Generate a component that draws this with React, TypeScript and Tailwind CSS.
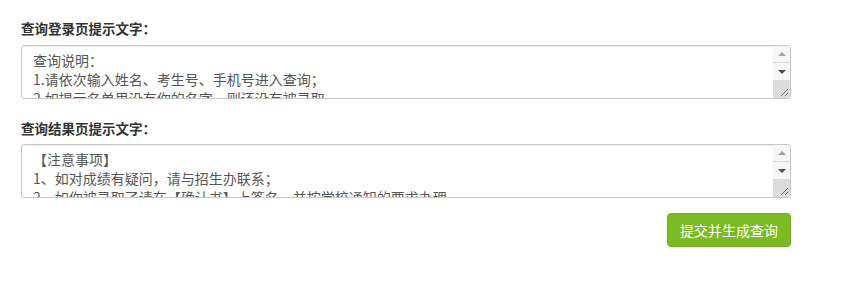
import { useState } from "react";

const font = { fontFamily: '"Microsoft YaHei", "Noto Sans CJK SC", "Liberation Sans", sans-serif' };

function FakeScrollbar() {
  return (
    <div className="w-[17px] h-full flex flex-col shrink-0 bg-[#f0f0f0]">
      <div className="h-[17px] flex items-center justify-center bg-[#f7f7f7] border-b border-[#dcdcdc]">
        <div className="w-0 h-0 border-l-[4px] border-r-[4px] border-b-[4px] border-l-transparent border-r-transparent border-b-[#a3a3a3]" />
      </div>
      <div className="h-[17px] flex items-center justify-center bg-[#f7f7f7]">
        <div className="w-0 h-0 border-l-[4px] border-r-[4px] border-t-[4px] border-l-transparent border-r-transparent border-t-[#505050]" />
      </div>
      <div className="flex-1 bg-[#dcdcdc] relative">
        <svg className="absolute right-[1px] bottom-[1px]" width="10" height="10" viewBox="0 0 10 10">
          <line x1="9" y1="2" x2="2" y2="9" stroke="#6d6d6d" strokeWidth="1" />
          <line x1="9" y1="6" x2="6" y2="9" stroke="#6d6d6d" strokeWidth="1" />
        </svg>
      </div>
    </div>
  );
}

function TipBox({ value, onChange }: { value: string; onChange: (v: string) => void }) {
  return (
    <div className="h-[54px] w-full flex border border-[#c8c8c8] rounded-[3px] overflow-hidden shadow-[inset_0_1px_1px_rgba(0,0,0,0.075)] bg-white">
      <textarea
        className="flex-1 h-full pl-[11px] pr-[4px] py-[5px] text-[14px] leading-[19px] text-[#555] overflow-hidden resize-none outline-none bg-transparent"
        value={value}
        onChange={(e) => onChange(e.target.value)}
      />
      <FakeScrollbar />
    </div>
  );
}

export default function App() {
  const [loginTip, setLoginTip] = useState(
    "查询说明：\n1.请依次输入姓名、考生号、手机号进入查询；\n2.如提示名单里没有你的名字，则还没有被录取。"
  );
  const [resultTip, setResultTip] = useState(
    "【注意事项】\n1、如对成绩有疑问，请与招生办联系；\n2、如你被录取了请在【确认书】上签名，并按学校通知的要求办理。"
  );

  return (
    <div className="w-[849px] h-[282px] bg-white text-[#333]" style={font}>
      <div className="w-[770px] ml-[21px] pt-[18px] flex flex-col">
        {/* 登录页 */}
        <label className="text-[13.5px] font-bold leading-[20px] h-[20px]">查询登录页提示文字：</label>
        <div className="mt-[7px]">
          <TipBox value={loginTip} onChange={setLoginTip} />
        </div>

        {/* 结果页 */}
        <label className="mt-[19px] text-[13.5px] font-bold leading-[20px] h-[20px]">查询结果页提示文字：</label>
        <div className="mt-[6px]">
          <TipBox value={resultTip} onChange={setResultTip} />
        </div>

        <div className="flex justify-end mt-[15px]">
          <button className="h-[34px] w-[124px] rounded-[4px] bg-[#7cbb24] border border-[#72ad1f] text-white text-[14px]">
            提交并生成查询
          </button>
        </div>
      </div>
    </div>
  );
}
